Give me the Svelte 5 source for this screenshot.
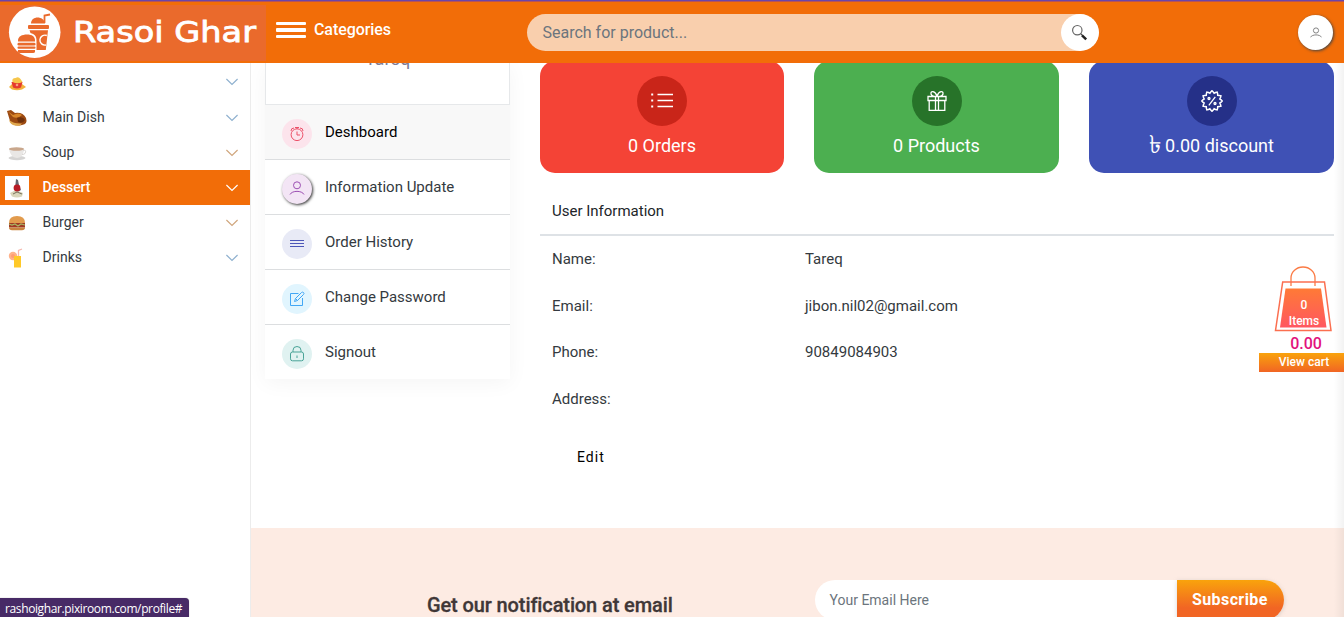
<script>
  const categories = [
    { name: 'Starters', icon: 'starter', tone: 'cool' },
    { name: 'Main Dish', icon: 'main', tone: 'cool' },
    { name: 'Soup', icon: 'soup', tone: 'warm' },
    { name: 'Dessert', icon: 'dessert', tone: 'active' },
    { name: 'Burger', icon: 'burger', tone: 'warm' },
    { name: 'Drinks', icon: 'drink', tone: 'cool' }
  ];
  const menu = [
    { name: 'Deshboard', icon: 'clock', kind: 'pink' },
    { name: 'Information Update', icon: 'user', kind: 'purple' },
    { name: 'Order History', icon: 'lines', kind: 'indigo' },
    { name: 'Change Password', icon: 'edit', kind: 'blue' },
    { name: 'Signout', icon: 'lock', kind: 'teal' }
  ];
  const stats = [
    { sign: '', label: '0 Orders', kind: 'red', icon: 'list' },
    { sign: '', label: '0 Products', kind: 'green', icon: 'gift' },
    { sign: '৳', label: '0.00 discount', kind: 'navy', icon: 'percent' }
  ];
  const info = [
    ['Name:', 'Tareq'],
    ['Email:', 'jibon.nil02@gmail.com'],
    ['Phone:', '90849084903'],
    ['Address:', '']
  ];
  const badge = Array.from({ length: 48 }, (_, i) => {
    const a = (i / 48) * Math.PI * 2;
    const r = 9.2 + 1.1 * Math.cos(12 * a);
    return `${(11 + r * Math.sin(a)).toFixed(2)},${(11 - r * Math.cos(a)).toFixed(2)}`;
  }).join(' ');
</script>

<div class="page">
  <header>
    <div class="logo">
      <svg width="266" height="56" viewBox="0 0 266 56">
        <circle cx="34.7" cy="27.2" r="25.8" fill="#fff" />
        <g fill="#ea6a2c">
          <path d="M18 36.500v-1c0-4 4-6 9-6s8 2 8 6v1z" />
          <rect x="17.500" y="37.800" width="18" height="2.700" rx="1.300" />
          <rect x="17.500" y="41.600" width="18" height="2.200" rx="1" />
          <path d="M18 45h17v1.500q0 1.500-2 1.500H20q-2 0-2-1.500z" />
          <rect x="28" y="20" width="21" height="4" rx="1" />
          <path d="M31 18.500c0-8 13-8 14 0z" />
          <path d="M29.500 25.300H48L45.800 45H36.500V36c0-5-2-7-6-8z" />
          <path d="M44.500 18V10.500L50 9.500" fill="none" stroke="#ea6a2c" stroke-width="1.800" />
        </g>
        <path d="M46.800 30.500a5 5 0 1 0-.8 9.500" fill="none" stroke="#fff" stroke-width="1.400" />
        <text x="73" y="37" textLength="183" lengthAdjust="spacingAndGlyphs">Rasoi Ghar</text>
      </svg>
    </div>
    <div class="cats">
      <span class="bars"><i></i><i></i><i></i></span>
      <span>Categories</span>
    </div>
    <div class="search">
      <span>Search for product...</span>
      <div class="go">
        <svg width="18" height="18" viewBox="0 0 18 18" fill="none">
          <circle cx="6.3" cy="6.2" r="4.7" stroke="#666" stroke-width="1.200" />
          <path d="M9.700 9.700l2 2" stroke="#444" stroke-width="1.200" />
          <path d="M11 11.300l4.200 4" stroke="#222" stroke-width="2.500" />
        </svg>
      </div>
    </div>
    <div class="avatar">
      <svg width="12" height="12" viewBox="0 0 12 12" fill="none" stroke="#777" stroke-width=".9">
        <circle cx="6" cy="3.500" r="2.600" /><path d="M.5 10.300c1.500-3.200 9.500-3.200 11 0" />
      </svg>
    </div>
  </header>

  <div class="body">
    <aside>
      {#each categories as c}
        <div class="cat" class:active={c.tone === 'active'}>
          <svg class="food" width="24" height="24" viewBox="0 0 24 24">
            {#if c.icon === 'starter'}
              <path d="M4 17l3-3 10 0 4 3-4 2.500q-5 1.500-10 0z" fill="#f3b13b" />
              <path d="M6.500 12h11l-1.500 5.500q-4 2-8 0z" fill="#e5392e" />
              <path d="M7.500 12q-1-4 3-4 3-2 5 1l2 3q-5 2.500-10 0z" fill="#f6c64b" />
              <circle cx="12" cy="15" r="1.300" fill="#f6a07c" />
            {:else if c.icon === 'main'}
              <path d="M2 5l4-1 4 3q8-1 11 5 2 6-4 7-9 2-12-4z" fill="#9c4a12" />
              <path d="M3 5.500l5 3.500q6-3 9 0-4 4-9 2z" fill="#d8872b" />
              <path d="M12 12q6-2 8 2-2 4-7 2z" fill="#6f310c" />
              <path d="M4 14q5 4 13 3.500l-2 2q-7 1-10-3z" fill="#e0a84e" />
            {:else if c.icon === 'soup'}
              <ellipse cx="12" cy="17" rx="8.500" ry="2.200" fill="#d5d4d3" />
              <path d="M4 7.500h15q0 9-7 9.500-7-.5-8-9.500z" fill="#e9e7e5" />
              <path d="M18 9.500q4-1 2 3-1 1-3 1" stroke="#d9d6d3" fill="none" />
              <ellipse cx="11.500" cy="8" rx="7.500" ry="1.800" fill="#c9a78c" />
            {:else if c.icon === 'dessert'}
              <rect width="24" height="24" fill="#fff" />
              <path d="M5 17l6-3 7 3-1 3.500q-5 2-10 0z" fill="#d9d5b9" />
              <path d="M11 3l2 1 1 5 2 5q-4 3-6-1z" fill="#65666f" />
              <circle cx="12" cy="12" r="3.400" fill="#b71b25" />
              <path d="M8 18l4-2 5 2" stroke="#77705b" fill="none" />
            {:else if c.icon === 'burger'}
              <path d="M4 12q0-7 8-7t8 7z" fill="#e29b4d" />
              <path d="M4 12h16v4.500H4z" fill="#a03a25" />
              <path d="M4 13l3 1 3-1 3 2 3-2 4 1" stroke="#a9b763" fill="none" stroke-width="1.200" />
              <path d="M4 16.500h16q0 2.700-3 2.700H7q-3 0-3-2.700z" fill="#c9843f" />
            {:else}
              <circle cx="8" cy="10" r="4.200" fill="#ffb28a" />
              <circle cx="8" cy="10" r="2" fill="#ff9d73" />
              <path d="M9 10h7v11.500H9z" fill="#ffc928" />
              <path d="M13.500 10V4.500L17 3" stroke="#f6b8ae" fill="none" stroke-width="1.300" />
            {/if}
          </svg>
          <span>{c.name}</span>
          <svg class="chev {c.tone}" width="12" height="8" viewBox="0 0 12 8" fill="none"><path d="M.4 1l5.600 5.500L11.600 1" /></svg>
        </div>
      {/each}
    </aside>

    <main>
      <div class="profile">
        <div class="card">
          <div class="who"><span>Tareq</span></div>
          {#each menu as m, i}
            <div class="item" class:on={i === 0}>
              <div class="dot {m.kind}">
                <svg width="16" height="16" viewBox="0 0 16 16" fill="none" stroke="currentColor" stroke-width="1">
                  {#if m.icon === 'clock'}
                    <circle cx="8" cy="8.700" r="5.900" /><path d="M8 5.500v3.500h3M6 1.500h4M8 1.500v1.600M2 5q0-3 3-3M14 5q0-3-3-3" />
                  {:else if m.icon === 'user'}
                    <circle cx="8" cy="4.300" r="3.500" /><path d="M1 13.500c2-4.200 12-4.200 14 0" />
                  {:else if m.icon === 'lines'}
                    <path d="M1 4.500h14M1 7.500h14M1 10.500h14" />
                  {:else if m.icon === 'edit'}
                    <path d="M9.500 2.500h-8v12h12V7M5.500 10.500l1-3 6-6q1-.8 2 0t0 2l-6 6zM6.500 7.500l2 2" />
                  {:else}
                    <rect x="1.500" y="6" width="13" height="8.800" rx="2" /><path d="M4 6V4.300q0-3.800 4-3.800t4 3.800V6M8 9.500v2.500" />
                  {/if}
                </svg>
              </div>
              <span>{m.name}</span>
            </div>
          {/each}
        </div>

        <section>
          <div class="stats">
            {#each stats as s}
              <div class="stat {s.kind}">
                <div class="disc">
                  <svg width="22" height="22" viewBox="0 0 22 22" fill="none" stroke="#fff" stroke-width="1.300">
                    {#if s.icon === 'list'}
                      <path d="M6.500 4.500H22M6.500 10.500H22M6.500 16.500H22" />
                      <path d="M.2 4.500h2M.2 10.500h2M.2 16.500h2" stroke-width="2" />
                    {:else if s.icon === 'gift'}
                      <path d="M2 6.500h18v4H2zM3.200 10.500h15.600v9.800H3.200zM9.500 6.500v14M12.500 6.500v14M11 6.300C9 .5 4.500.5 5 4q.5 2 3 2.300M11 6.300c2-5.800 6.500-5.800 6-2.300q-.5 2-3 2.300" />
                    {:else}
                      <polygon points={badge} stroke-width="1.500" />
                      <path d="M14.300 6.800l-6.500 8.500" /><circle cx="8" cy="8.500" r="1" /><circle cx="14" cy="13.500" r="1" />
                    {/if}
                  </svg>
                </div>
                <span>{#if s.sign}<em>{s.sign}</em>{/if}{s.label}</span>
              </div>
            {/each}
          </div>
          <h2>User Information</h2>
          <div class="info">
            {#each info as [k, v]}
              <div class="row"><span>{k}</span><span>{v}</span></div>
            {/each}
          </div>
          <div class="edit">Edit</div>
        </section>
      </div>

      <div class="news">
        <strong>Get our notification at email</strong>
        <div class="form"><span>Your Email Here</span><b>Subscribe</b></div>
      </div>
    </main>
  </div>

  <div class="edge"></div>
  <div class="cart">
    <div class="bag">
      <svg width="58" height="66" viewBox="0 0 58 66" fill="none">
        <defs><linearGradient id="bagfill" x1="0" y1="0" x2="0" y2="1"><stop offset="0" stop-color="#ff7a36" /><stop offset="1" stop-color="#ff5760" /></linearGradient></defs>
        <path d="M17 20V12a12 11 0 0 1 24 0v8" stroke="#fb7b45" stroke-width="1.300" />
        <path d="M8.700 16h41.800l6.500 48.500H1.500z" stroke="#fb6f50" stroke-width="1.500" />
        <path d="M11.500 22.500H47l5.500 39H6z" fill="url(#bagfill)" />
      </svg>
      <div class="count"><span>0</span><span>Items</span></div>
    </div>
    <div class="price">0.00</div>
    <div class="view">View cart</div>
  </div>
  <div class="status">rashoighar.pixiroom.com/profile#</div>
</div>

<style>
  :global(body) { overflow: hidden; background: #fff; }
  .page { position: relative; height: 617px; width: 1344px; overflow: hidden; font-family: Roboto, sans-serif; color: #343a40; display: flex; flex-direction: column; }
  header { position: relative; z-index: 2; box-sizing: border-box; height: 63px; flex: none; background: #f26d08; border-top: 1px solid #6b45a8; display: flex; box-shadow: inset 0 1px #b55358; }
  .logo { width: 266px; height: 56px; margin-top: 4px; background: #ea6a2c; }
  .logo svg { display: block; }
  .logo text { font: 28.500px "DejaVu Sans", sans-serif; fill: #fff; stroke: #fff; stroke-width: .8; }
  .cats { display: flex; gap: 8px; margin-left: 10px; height: 56px; align-items: center; color: #fff; font-size: 16px; font-weight: 500; width: 251px; letter-spacing: -.08px; }
  .bars { display: flex; flex-direction: column; gap: 3px; width: 30px; margin-top: 2px; }
  .bars i { height: 3.300px; background: #fff; border-radius: 1px; }
  .search { display: flex; align-items: center; justify-content: space-between; width: 572px; height: 37px; margin-top: 13px; box-sizing: border-box; padding-left: 15.500px; border-radius: 19px; background: #f9cfad; color: #6c757d; font-size: 16px; overflow: hidden; }
  .go { width: 38px; height: 37px; border-radius: 50%; background: #fff; display: grid; place-items: center; }
  .avatar { margin: 14px 0 0 199px; width: 35px; height: 35px; border-radius: 50%; background: #fff; display: grid; place-items: center; box-shadow: 1px 1px 3px #444; }
  .body { flex: 1; min-height: 0; display: flex; }
  aside { width: 250px; flex: none; border-right: 1px solid #ececec; }
  .cat { height: 35px; box-sizing: border-box; padding: 0 12px 1px 5px; display: flex; align-items: center; font-size: 14px; }
  .cat:nth-child(-n+2) { height: 36px; padding-bottom: 0; }
  .cat .food { margin-top: 1px; }
  .cat span { flex: 1; margin-left: 13.500px; letter-spacing: .03px; }
  .cat.active { background: #f26d08; color: #fff; font-weight: 500; }
  .cat.active span { letter-spacing: -.1px; }
  .chev { margin-top: 1px; }
  .chev path { stroke: #8fb1cf; stroke-width: 1.200; }
  .chev.warm path { stroke: #d0a67d; }
  .chev.active path { stroke: #fff; }
  main { flex: 1; min-width: 0; }
  .profile { height: 465px; display: flex; padding: 0 10px 0 14px; }
  .card { width: 245px; height: 316px; background: #fff; box-shadow: 0 4px 20px rgba(0,0,0,.045); flex: none; }
  .who { display: flow-root; height: 42px; border: 1px solid #e6e8ea; border-top: 0; box-sizing: border-box; text-align: center; color: #7d7d96; font-size: 18px; background: #fff; }
  .who span { display: block; line-height: 22px; margin-top: -15px; }
  .item { height: 55px; box-sizing: border-box; border-bottom: 1px solid #dcdee0; display: flex; align-items: center; padding: 3px 17px 0; gap: 13px; font-size: 15px; }
  .item:last-child { border-bottom: 0; padding-top: 2px; }
  .item > span { margin-top: -4px; }
  .item.on { background: #f8f8f8; color: #000; }
  .dot { width: 30px; height: 30px; border-radius: 50%; display: grid; place-items: center; margin-top: 1px; }
  .pink { background: #fce4ec; color: #ec5169; }
  .purple { background: #f3e5f5; color: #9c4fb3; box-shadow: 1px 1px 3px #333; }
  .indigo { background: #e8eaf6; color: #4d57b8; }
  .blue { background: #e1f5fe; color: #42a7f5; }
  .teal { background: #e0f2f1; color: #49a397; }
  section { flex: 1; margin-left: 30px; }
  .stats { display: grid; grid-template-columns: 244px 245px 245px; gap: 30px; margin-top: -2px; }
  .stat { height: 112px; border-radius: 15px; box-sizing: border-box; padding-top: 15px; display: flex; flex-direction: column; align-items: center; color: #fff; font-size: 18px; }
  .stat:last-child { margin-left: 0; width: 245px; }
  .stat span { line-height: 22px; margin-top: 9px; display: flex; align-items: center; gap: 4px; height: 22px; }
  .stat em { font-style: normal; font-size: 25px; line-height: 20px; margin-top: -3px; }
  .disc { width: 50px; height: 50px; border-radius: 50%; display: grid; place-items: center; }
  .red { background: #f44336; } .red .disc { background: #c92519; }
  .green { background: #4caf50; } .green .disc { background: #277329; }
  .navy { background: #3f51b5; } .navy .disc { background: #253088; }
  h2 { margin: 0; padding: 26px 12px 0; height: 35px; border-bottom: 2px solid #dee2e6; font-weight: 400; font-size: 15px; line-height: 24px; color: #212529; }
  .info { padding: 0 12px; font-size: 15px; }
  .row { display: grid; grid-template-columns: 253px 1fr; height: 46.700px; line-height: 46px; }
  .edit { margin: 25px 0 0 37px; font-size: 14px; line-height: 18px; color: #000; letter-spacing: 1px; }
  .news { height: 89px; background: #fdebe3; display: flex; padding: 52px 60px 0 176px; box-sizing: border-box; }
  .news strong { width: 388px; font-size: 20px; font-weight: 500; line-height: 50px; color: #403737; -webkit-text-stroke: .3px; letter-spacing: -.11px; }
  .form { width: 469px; height: 40px; border-radius: 20px; background: #fff; display: flex; justify-content: space-between; font-size: 14px; color: #6c757d; line-height: 40px; padding-left: 14.500px; box-sizing: border-box; }
  .form b { width: 107px; box-sizing: border-box; padding-left: 15px; border-radius: 0 20px 20px 0; background: linear-gradient(#f9a30c, #f16524 70%); color: #fff; font-size: 16px; letter-spacing: .4px; box-shadow: 0 1px 4px #9996; }
  .edge { position: absolute; right: 0; top: 63px; bottom: 0; width: 10px; background: linear-gradient(90deg, transparent, rgba(0,0,0,.05)); }
  .cart { position: absolute; right: 0; top: 266px; width: 85px; display: flex; flex-direction: column; align-items: center; }
  .bag { position: relative; width: 58px; height: 66px; margin-left: 2px; }
  .bag svg { display: block; }
  .count { position: absolute; inset: 31px 0 0 3px; display: flex; flex-direction: column; align-items: center; color: #fff; font-size: 12px; font-weight: 500; line-height: 16px; }
  .price { font-size: 16px; font-weight: 500; line-height: 23px; height: 21px; color: #e2127c; margin-left: 9px; }
  .view { width: 85px; height: 19px; line-height: 18px; background: linear-gradient(#f9a30c, #f16524); color: #fff; font-size: 12px; font-weight: 500; text-align: center; box-sizing: border-box; padding-left: 5px; }
  .status { position: absolute; left: 0; bottom: 0; width: 189px; height: 19px; box-sizing: border-box; padding-left: 5px; border-radius: 0 4px 0 0; background: #472a66; color: #fff; font: 12px/21px "Open Sans", sans-serif; letter-spacing: -.38px; white-space: nowrap; box-shadow: 0 0 1px #888; }
</style>
